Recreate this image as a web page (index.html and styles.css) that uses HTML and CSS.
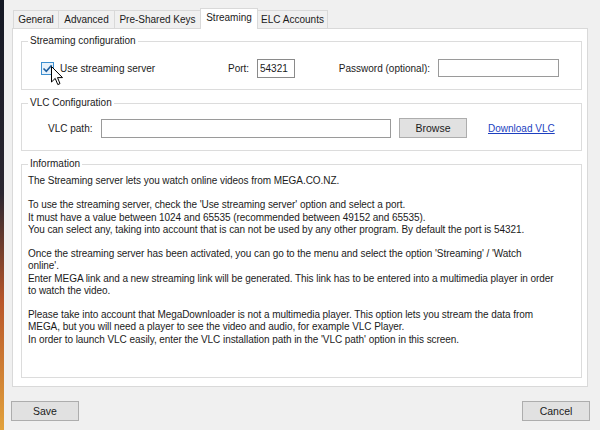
FILE: index.html
```html
<!DOCTYPE html>
<html lang="en">
<head>
  <meta charset="UTF-8" />
  <title>Options - Streaming</title>
  <link rel="stylesheet" href="styles.css">
</head>
<body>
  <div class="screen">
    <div class="desk"></div>
    <div class="dialog">
      <div class="tabs">
        <div class="tab t-general">General</div>
        <div class="tab t-advanced">Advanced</div>
        <div class="tab t-psk">Pre-Shared Keys</div>
        <div class="tab t-streaming active">Streaming</div>
        <div class="tab t-elc">ELC Accounts</div>
      </div>

      <div class="panel">
        <fieldset class="group">
          <legend>Streaming configuration</legend>
          <div class="row row-stream">
            <label class="check">
              <span class="box">
                <svg width="11" height="11" viewBox="0 0 11 11"><path d="M1.5 5.5 L4.3 8.3 L9.6 2.2" fill="none" stroke="#1f5f9e" stroke-width="1.6"/></svg>
              </span>
              Use streaming server
            </label>
            <span class="lbl-port">Port:</span>
            <input class="field port" type="text" value="54321">
            <span class="lbl-pass">Password (optional):</span>
            <input class="field pass" type="text" value="">
          </div>
        </fieldset>

        <fieldset class="group">
          <legend>VLC Configuration</legend>
          <div class="row row-vlc">
            <span class="lbl-path">VLC path:</span>
            <input class="field path" type="text" value="">
            <button class="btn browse">Browse</button>
            <a class="link" href="#">Download VLC</a>
          </div>
        </fieldset>

        <fieldset class="group info">
          <legend>Information</legend>
          <div class="info-text">
            <p>The Streaming server lets you watch online videos from MEGA.CO.NZ.</p>
            <p>To use the streaming server, check the 'Use streaming server' option and select a port.<br>
            It must have a value between 1024 and 65535 (recommended between 49152 and 65535).<br>
            You can select any, taking into account that is can not be used by any other program. By default the port is 54321.</p>
            <p>Once the streaming server has been activated, you can go to the menu and select the option 'Streaming' / 'Watch<br>
            online'.<br>
            Enter MEGA link and a new streaming link will be generated. This link has to be entered into a multimedia player in order<br>
            to watch the video.</p>
            <p>Please take into account that MegaDownloader is not a multimedia player. This option lets you stream the data from<br>
            MEGA, but you will need a player to see the video and audio, for example VLC Player.<br>
            In order to launch VLC easily, enter the VLC installation path in the 'VLC path' option in this screen.</p>
          </div>
        </fieldset>
      </div>

      <div class="footer">
        <button class="btn">Save</button>
        <button class="btn">Cancel</button>
      </div>

      <svg class="cursor" width="13" height="20" viewBox="0 0 13 20">
        <path d="M0.5 0.5 L0.5 16 L4.2 12.4 L6.8 18.6 L9 17.6 L6.5 11.6 L11.5 11.6 Z" fill="#fff" stroke="#000" stroke-width="1" stroke-linejoin="round"/>
      </svg>
    </div>
  </div>
</body>
</html>
```

FILE: styles.css
```css
body {
  margin: 0;
  font-family: "Liberation Sans", Arial, sans-serif;
  font-size: 10px;
  color: #1b1b1b;
  background: #f0f0f0;
}
.screen {
  display: flex;
  height: 430px;
  overflow: hidden;
}
.desk {
  width: 4px;
  background: linear-gradient(#141824, #2a2630 45%, #b8562a 70%, #e2a23c);
}
.dialog {
  flex: 1;
  position: relative;
  padding-top: 7px;
}

/* tabs */
.tabs {
  display: flex;
  align-items: flex-end;
  margin-left: 9px;
  height: 21px;
}
.tab {
  box-sizing: border-box;
  height: 18px;
  border: 1px solid #d9d9d9;
  border-bottom: none;
  background: #f0f0f0;
  display: flex;
  align-items: center;
  justify-content: center;
  margin-right: -1px;
}
.tab.active {
  height: 21px;
  background: #fff;
  position: relative;
  z-index: 1;
  margin-bottom: -1px;
  padding-bottom: 3px;
}
.t-general { width: 46px; }
.t-advanced { width: 57px; }
.t-psk { width: 87px; }
.t-streaming { width: 58px; }
.t-elc { width: 71px; }

/* panel */
.panel {
  box-sizing: border-box;
  margin-left: 8px;
  width: 576px;
  height: 359px;
  background: #fff;
  border: 1px solid #d9d9d9;
  padding: 6px 0 8px 8px;
  display: flex;
  flex-direction: column;
}
.group {
  box-sizing: border-box;
  width: 561px;
  margin: 0 0 7px 0;
  padding: 0;
  border: 1px solid #dcdcdc;
  min-width: 0;
}
.group legend {
  margin-left: 6px;
  padding: 0 2px;
  line-height: 12px;
  color: #1b1b1b;
}
.row {
  display: flex;
  align-items: center;
}
.row-stream {
  padding: 11px 0 11px 19px;
  height: 20px;
}
.check {
  width: 187px;
  display: flex;
  align-items: center;
}
.box {
  box-sizing: border-box;
  width: 13px;
  height: 13px;
  border: 1px solid #3c8fd0;
  background: #e8f2fb;
  display: flex;
  align-items: center;
  justify-content: center;
  margin-right: 6px;
}
.lbl-port { width: 29px; }
.lbl-pass {
  width: 143px;
  text-align: right;
  padding-right: 8px;
  box-sizing: border-box;
}
.field {
  box-sizing: border-box;
  border: 1px solid #7a7a7a;
  background: #fff;
  font: inherit;
  color: #1b1b1b;
  padding: 0 2px;
  outline: none;
}
.port { width: 38px; height: 19px; border-color: #8a8a8a; }
.pass { width: 121px; height: 18px; border-color: #9a9a9a; }

.row-vlc {
  padding: 9px 0 12px 26px;
  height: 20px;
}
.lbl-path { width: 53px; }
.path { width: 290px; height: 19px; border-color: #9a9a9a; }
.btn {
  box-sizing: border-box;
  width: 68px;
  height: 20px;
  background: #e1e1e1;
  border: 1px solid #adadad;
  font: inherit;
  font-size: 10.5px;
  color: #1b1b1b;
  padding: 0;
}
.browse { margin-left: 8px; }
.link {
  margin-left: 21px;
  color: #1c3fbf;
  text-decoration: underline;
}

.info {
  flex: 1;
  margin-bottom: 0;
}
.info-text {
  padding: 5px 0 0 6px;
  line-height: 12.2px;
  letter-spacing: -0.06px;
}
.info-text p {
  margin: 0 0 12.2px 0;
}

/* footer */
.footer {
  display: flex;
  justify-content: space-between;
  margin: 14px 10px 0 7px;
}

.cursor {
  position: absolute;
  left: 47px;
  top: 66px;
}
```
